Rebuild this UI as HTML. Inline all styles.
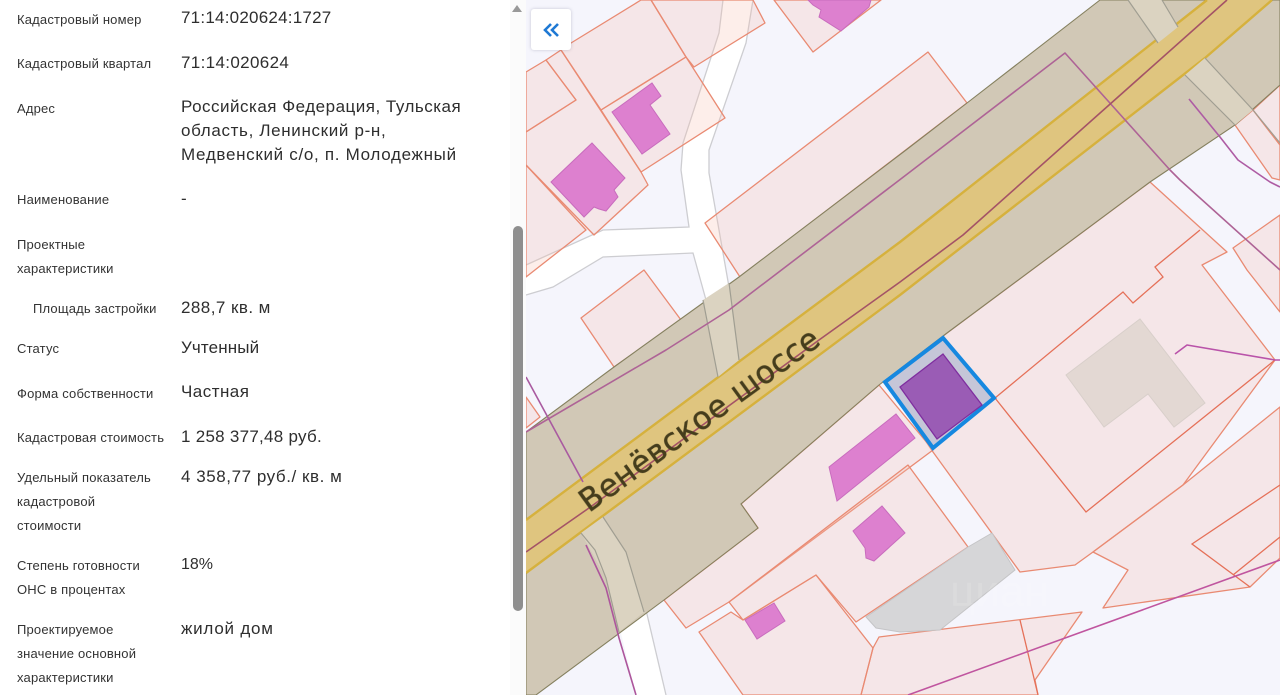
<!DOCTYPE html>
<html lang="ru"><head><meta charset="utf-8"><title>Кадастровая карта</title>
<style>
html,body{margin:0;padding:0;width:1280px;height:695px;overflow:hidden;background:#fff}
body{position:relative;font-family:"Liberation Sans","DejaVu Sans",sans-serif}
#panel{position:absolute;left:0;top:0;width:526px;height:695px;background:#fff;overflow:hidden;filter:blur(.3px)}
.l,.v{position:absolute;white-space:nowrap;height:20px;line-height:20px}
.l{left:17px;font-size:13px;color:#333;letter-spacing:.18px}
.v{left:181px;font-size:17px;color:#2e2e2e}
#track{position:absolute;left:510px;top:0;width:16px;height:695px;background:#fbfbfb}
#arrow{position:absolute;left:512px;top:5px;width:0;height:0;border-left:5px solid transparent;border-right:5px solid transparent;border-bottom:7px solid #999}
#thumb{position:absolute;left:513px;top:226px;width:10px;height:385px;background:#8e8e8e;border-radius:5px}
#map{position:absolute;left:0;top:0;width:1280px;height:695px}
#btn{position:absolute;left:531px;top:9px;width:40px;height:41px;background:#fff;border-radius:3px;box-shadow:0 0 3px rgba(90,90,120,.3);z-index:2}
</style></head><body>
<svg id="map" viewBox="0 0 1280 695" xmlns="http://www.w3.org/2000/svg">
<defs><filter id="b"><feGaussianBlur stdDeviation=".3"/></filter></defs>
<g filter="url(#b)">
<rect x="526" y="0" width="754" height="695" fill="#f5f5fc"/>
<g fill="#fff">
<polygon points="723,0 719,33 683,143 681,170 689,227 603,230 526,265 526,295 553,287 603,257 693,253 706,300 740,300 729,287 709,173 709,150 746,43 753,0"/>
<polygon points="619,625 636,695 666,695 646,610"/>
</g>
<g fill="none" stroke="#cdcdd1" stroke-width="1.3">
<path d="M723,0 719,33 683,143 681,170 689,227 603,230 526,265"/>
<path d="M753,0 746,43 709,150 709,173 729,287"/>
<path d="M526,295 553,287 603,257 693,253 706,300"/>
<path d="M646,610 666,695"/>
</g>
<g fill="#f9bfae" fill-opacity=".26" stroke="#e98a72" stroke-width="1.3" stroke-linejoin="round">
<polygon points="571,43 641,0 651,0 686,57 601,110 561,50"/>
<polygon points="651,0 753,0 765,23 694,67 686,57"/>
<polygon points="686,57 725,118 641,172 601,110"/>
<polygon points="526,132 576,100 546,60 561,50 641,172 648,185 594,235 526,165"/>
<polygon points="526,72 546,60 576,100 526,132"/>
<polygon points="526,165 586,230 526,277"/>
<polygon points="774,0 881,0 813,52"/>
<polygon points="705,223 928,52 967,103 740,277"/>
<polygon points="581,318 644,270 681,320 614,367"/>
<polygon points="526,397 540,417 526,428"/>
<polygon points="947,333 1150,182 1227,252 1202,265 1275,360 1183,485 1093,552 1075,565 1020,572 933,452 885,380"/>
<polygon points="1093,552 1183,485 1280,407 1280,558 1250,587 1103,608 1128,570"/>
<polygon points="1233,248 1280,215 1280,312 1247,270"/>
<polygon points="1235,125 1253,110 1280,145 1280,180 1272,178"/>
<polygon points="1253,110 1280,85 1280,145"/>
<polygon points="664,600 758,528 741,504 879,385 933,450 729,602 686,628"/>
<polygon points="729,602 908,465 968,547 856,622 816,575 743,620"/>
<polygon points="699,632 731,612 743,620 816,575 873,648 861,695 743,695"/>
<polygon points="879,637 1082,612 1035,680 1038,695 861,695 873,648"/>
</g>
<g fill="none" stroke="#e57058" stroke-width="1.3">
<path d="M995,398 1123,292 1133,303 1163,277 1155,267 1200,230"/>
<path d="M995,398 1086,512 1275,360"/>
<path d="M1280,485 1192,544 1250,587"/>
<path d="M1233,575 1280,537"/>
<path d="M1020,620 1038,695"/>
</g>
<polygon points="968,547 992,533 1015,570 940,630 900,632 876,628 866,617" fill="#d6d6d8" stroke="#c4c4c6" stroke-width="1"/>
<polygon points="1066,375 1140,319 1205,403 1174,427 1148,394 1104,427" fill="#e3d8d3" stroke="#d8cfca" stroke-width="1"/>
<g fill="#dd80cf" stroke="#c86cbd" stroke-width="1">
<polygon points="612,112 652,83 661,96 650,105 670,134 642,154"/>
<polygon points="551,182 592,143 625,178 614,190 618,197 606,211 599,209 594,207 584,217"/>
<polygon points="808,0 871,0 869,7 841,31 819,17 821,10 813,5"/>
<polygon points="829,467 896,414 915,438 837,501"/>
<polygon points="853,531 882,506 905,533 874,561 866,558 865,548"/>
<polygon points="745,620 774,603 785,621 757,639"/>
</g>
<!-- main road -->
<polygon points="526,432 614,367 739,277 906,150 967,103 1100,0 1280,0 1280,85 1235,125 1150,182 947,333 879,385 741,504 758,528 664,600 536,695 526,695" fill="#d1c8b6" stroke="#85805f" stroke-width="1.1"/>
<polygon points="526,520 900,242 1207,0 1272,0 1205,58 900,295 526,573" fill="#dfc57f"/>
<path d="M526,520 900,242 1207,0M526,573 900,295 1205,58 1272,0" fill="none" stroke="#d6b13c" stroke-width="2.4"/>
<g fill="#dbd3c1">
<polygon points="1128,0 1158,43 1178,27 1162,0"/>
<polygon points="1205,58 1253,110 1235,125 1185,75"/>
<polygon points="581,533 603,517 626,552 644,612 619,632 606,578"/>
<polygon points="703,300 729,283 739,360 718,377"/>
</g>
<g fill="none" stroke="#a09e92" stroke-width="1.2">
<path d="M1128,0 1158,43M1162,0 1178,27"/>
<path d="M1185,75 1235,125M1205,58 1253,110 1280,143"/>
<path d="M581,533 595,550 606,578 619,632M603,517 626,552 644,612"/>
<path d="M703,300 718,377M729,283 739,360"/>
</g>
<!-- purple lines -->
<g fill="none" stroke-linejoin="round">
<path d="M526,432 666,350 729,310 906,175 1065,53 1170,170 1180,180 1280,270" stroke="#ae6496" stroke-width="1.6"/>
<path d="M526,552 589,508 819,340 900,282 963,235 1227,0" stroke="#a45266" stroke-width="1.6"/>
<path d="M1189,99 1220,137 1238,160 1270,182 1280,187" stroke="#ae5ca4" stroke-width="1.6"/>
<path d="M526,377 583,482" stroke="#a95aa0" stroke-width="1.6"/>
<path d="M586,545 606,588 619,638 636,695" stroke="#ad569c" stroke-width="1.6"/>
<path d="M908,695 1280,560" stroke="#c0559f" stroke-width="1.6"/>
<path d="M1175,354 1187,345 1275,360 1280,360" stroke="#b952a9" stroke-width="1.6"/>
</g>
<!-- selected -->
<polygon points="885,382 943,338 994,398 933,448" fill="#c5c6d8" stroke="#1488e0" stroke-width="4" stroke-linejoin="miter"/>
<polygon points="900,387 943,354 982,405 937,439" fill="#9a5bb5" stroke="#7f2f9f" stroke-width="1.3"/>
</g>
<text x="950" y="606" font-family="Liberation Sans,sans-serif" font-size="44" fill="#fff" fill-opacity=".12">циан</text>
<text x="0" y="0" transform="translate(589,513) rotate(-36)" font-family="DejaVu Sans,sans-serif" font-size="31" fill="#453d1f" stroke="#453d1f" stroke-width=".5" textLength="288" lengthAdjust="spacing" filter="url(#b)">Венёвское шоссе</text>
</svg>
<div id="btn"><svg width="40" height="41" viewBox="0 0 40 41"><path d="M20,15 14,21 20,27M27,15 21,21 27,27" fill="none" stroke="#1f79d4" stroke-width="2.600"/></svg></div>
<div id="panel">
<div class="l" style="top:10px">Кадастровый номер</div><div class="v" style="top:8px;letter-spacing:.23px">71:14:020624:1727</div>
<div class="l" style="top:54px">Кадастровый квартал</div><div class="v" style="top:53px;letter-spacing:.35px">71:14:020624</div>
<div class="l" style="top:99px">Адрес</div>
<div class="v" style="top:97px;letter-spacing:.5px">Российская Федерация, Тульская</div>
<div class="v" style="top:121px;letter-spacing:.66px">область, Ленинский р-н,</div>
<div class="v" style="top:145px;letter-spacing:.69px">Медвенский с/о, п. Молодежный</div>
<div class="l" style="top:190px">Наименование</div><div class="v" style="top:189px">-</div>
<div class="l" style="top:235px">Проектные</div>
<div class="l" style="top:259px">характеристики</div>
<div class="l" style="top:299px;left:33px">Площадь застройки</div><div class="v" style="top:298px;letter-spacing:.45px">288,7 кв. м</div>
<div class="l" style="top:339px">Статус</div><div class="v" style="top:338px;letter-spacing:.13px">Учтенный</div>
<div class="l" style="top:384px">Форма собственности</div><div class="v" style="top:382px;letter-spacing:.47px">Частная</div>
<div class="l" style="top:428px">Кадастровая стоимость</div><div class="v" style="top:427px;letter-spacing:.27px">1 258 377,48 руб.</div>
<div class="l" style="top:468px">Удельный показатель</div><div class="v" style="top:467px;letter-spacing:.55px">4 358,77 руб./ кв. м</div>
<div class="l" style="top:492px">кадастровой</div>
<div class="l" style="top:516px">стоимости</div>
<div class="l" style="top:556px">Степень готовности</div><div class="v" style="top:555px;font-size:16px">18%</div>
<div class="l" style="top:580px">ОНС в процентах</div>
<div class="l" style="top:620px">Проектируемое</div><div class="v" style="top:619px;letter-spacing:.78px">жилой дом</div>
<div class="l" style="top:644px">значение основной</div>
<div class="l" style="top:668px">характеристики</div>
<div id="track"></div><div id="arrow"></div><div id="thumb"></div>
</div>
</body></html>
